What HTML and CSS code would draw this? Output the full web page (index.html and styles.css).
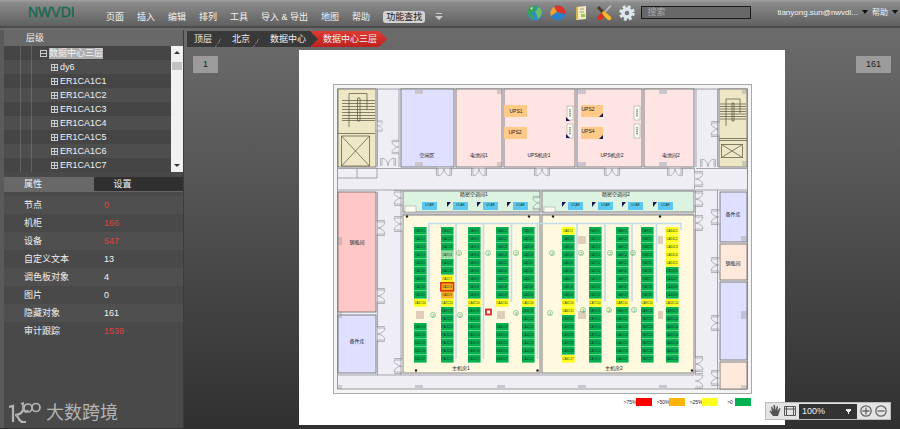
FILE: index.html
```html
<!DOCTYPE html>
<html lang="zh-CN">
<head>
<meta charset="utf-8">
<title>NWVDI</title>
<link rel="stylesheet" href="styles.css">
</head>
<body>
<header class="topbar">
  <a class="logo" href="#">NWVDI</a>
  <nav class="menu">
    <a href="#">页面</a><a href="#">插入</a><a href="#">编辑</a><a href="#">排列</a><a href="#">工具</a><a href="#">导入 &amp; 导出</a><a href="#">地图</a><a href="#">帮助</a>
    <button class="find" type="button">功能查找</button>
    <button class="icon more" type="button" aria-label="更多"><svg width="8" height="10" viewBox="0 0 8 10"><path d="M1 1.500h6" stroke="#ccc"/><path d="M0 4h8L4 8z" fill="#ccc"/></svg></button>
  </nav>
  <div class="tools">
    <button class="icon" type="button" aria-label="地球"><svg width="16" height="16" viewBox="0 0 16 16"><circle cx="8" cy="8" r="7.500" fill="#2f8fc4"/><path d="M1 5C3 1 7 0 9 1l1 2-2 1 0 2-3 1-1 2 3 2-1 3C3 13 0 9 1 5z" fill="#3ba253"/><path d="M11 2c3 1 4 4 4 6l-2 4-2 2-1-4-2-3 2-2z" fill="#6fbf62"/><path d="M3 3l3-1-1 3z" fill="#bfe5c4"/></svg></button>
    <button class="icon" type="button" aria-label="图表"><svg width="16" height="16" viewBox="0 0 16 16"><circle cx="8" cy="8" r="7.500" fill="#2d80c8"/><path d="M7 7L4 1.700A7.500 7.500 0 0 1 15.400 9z" fill="#dc3426"/><path d="M7 7L4 1.700A7.500 7.500 0 0 0 1 11z" fill="#f1a02d"/></svg></button>
    <button class="icon" type="button" aria-label="报表"><svg width="16" height="16" viewBox="0 0 16 16"><path d="M3 2l10-1v13l-10 1z" fill="#f1edc2"/><path d="M3 2v13l2-1V2z" fill="#d6b64b"/><path d="M7 4h4M7 7h4" stroke="#98a475"/><path d="M8 9h4v3H8z" fill="#a8c85c"/></svg></button>
    <button class="icon" type="button" aria-label="工具"><svg width="16" height="16" viewBox="0 0 16 16"><path d="M15 0.500L8 8" stroke="#b9c3c6" stroke-width="1.500"/><path d="M2 2l5 5" stroke="#4a3927" stroke-width="3"/><path d="M8 6l3 3-6 6c-2 1-4-1-4-3z" fill="#d9301e"/><path d="M6 7l2-1 7 6c1 2-1 4-3 3L7 10z" fill="#f6bb2c"/></svg></button>
    <button class="icon" type="button" aria-label="设置"><svg width="16" height="16" viewBox="0 0 16 16"><circle cx="8" cy="8" r="6.300" fill="none" stroke="#dce7ec" stroke-width="3" stroke-dasharray="2.800 2.150"/><circle cx="8" cy="8" r="4" fill="none" stroke="#dce7ec" stroke-width="3.500"/></svg></button>
  </div>
  <input class="search" type="search" placeholder="搜索" aria-label="搜索">
  <div class="account">
    <a href="#">tianyong.sun@nwvdi...<span class="caret"></span></a>
    <a href="#">帮助<span class="caret"></span></a>
  </div>
</header>

<div class="body">
  <aside class="sidebar">
    <h2 class="panel-title">层级</h2>
    <div class="tree-wrap">
      <ul class="tree">
        <li class="root"><span class="box minus"></span><span class="selected">数据中心三层</span></li>
        <li><span class="box"></span>dy6</li>
        <li><span class="box"></span>ER1CA1C1</li>
        <li><span class="box"></span>ER1CA1C2</li>
        <li><span class="box"></span>ER1CA1C3</li>
        <li><span class="box"></span>ER1CA1C4</li>
        <li><span class="box"></span>ER1CA1C5</li>
        <li><span class="box"></span>ER1CA1C6</li>
        <li><span class="box"></span>ER1CA1C7</li>
      </ul>
      <div class="scroll"><span class="up"></span><span class="thumb"></span><span class="down"></span></div>
    </div>
    <div class="tabs"><button class="active" type="button">属性</button><button type="button">设置</button></div>
    <table class="props">
      <tr><th scope="row">节点</th><td class="alert">0</td></tr>
      <tr><th scope="row">机柜</th><td class="alert">166</td></tr>
      <tr><th scope="row">设备</th><td class="alert">547</td></tr>
      <tr><th scope="row">自定义文本</th><td>13</td></tr>
      <tr><th scope="row">调色板对象</th><td>4</td></tr>
      <tr><th scope="row">图片</th><td>0</td></tr>
      <tr><th scope="row">隐藏对象</th><td>161</td></tr>
      <tr><th scope="row">审计跟踪</th><td class="alert">1538</td></tr>
    </table>
    <div class="brand">
      <svg width="32" height="22" viewBox="0 0 32 22" fill="none" stroke="#b4b4b4"><path d="M0 5l4-1v16M14 8Q12 13 6 13c4 0 3 7 8 7h3" stroke-width="2.200"/><path d="M12 2l2-1v6c0 3 3 4 5 1" stroke-width="1.700"/><circle cx="19" cy="6" r="4" stroke-width="1.700"/><circle cx="27" cy="5.500" r="4" stroke-width="1.700"/></svg>
      <span>大数跨境</span>
    </div>
  </aside>

  <main class="workspace">
    <nav class="crumbs" aria-label="位置"><a href="#">顶层</a><a href="#">北京</a><a href="#">数据中心</a><a class="current" href="#">数据中心三层</a></nav>
    <div class="stage">
      <button class="count" type="button">1</button>
      <svg class="plan" viewBox="299 50 486 375" role="img" aria-label="数据中心三层平面图">
        <defs>
          <g id="door" fill="none" stroke="#8b8b92" stroke-width=".6"><path d="M-7.500 0V8M-6 0V8Q-.5 7 0 0M7.500 0V8M6 0V8Q.5 7 0 0"/><path d="M-6 0H6" stroke="#f0eef5"/></g>
          <g id="ac"><rect width="15" height="8" fill="#5cc8f2"/><text class="tiny" x="7.500" y="4">UCAR</text></g>
          <path id="flag" d="M0 0h4l-4 5z" fill="#17174d"/>
          <path id="corner" d="M4 0v4h-4z" fill="#17174d"/>
          <g id="cab"><rect width="6" height="14" fill="#fafaf0" stroke="#999" stroke-width=".5"/><path d="M3 3v8" stroke="#65795a" stroke-width="1.200" stroke-dasharray="1.500 .5"/></g>
          <rect id="pillar" width="8" height="4" fill="#cbc5cf"/>
        </defs>
        <rect x="299" y="50" width="486" height="375" fill="#fff"/>
        <rect x="333.500" y="84.500" width="418" height="309" fill="#f4f4f4" stroke="#aaa"/>
        <rect x="337.500" y="89" width="410" height="300" fill="#f0eef5" stroke="#777" stroke-width=".7"/>
        <g class="rooms">
          <rect class="sand" x="338" y="89" width="38" height="78"/>
          <rect class="blue" x="401" y="89" width="53" height="78"/>
          <rect class="pink" x="456" y="89" width="46" height="78"/>
          <rect class="pink" x="504" y="89" width="71" height="78"/>
          <rect class="pink" x="577" y="89" width="65" height="78"/>
          <rect class="pink" x="644" y="89" width="50" height="78"/>
          <rect class="sand" x="719" y="89" width="28" height="78"/>
          <rect class="rose" x="338" y="192" width="38" height="120"/>
          <rect class="blue" x="338" y="315" width="38" height="58"/>
          <rect class="green" x="403" y="191" width="137" height="21"/>
          <rect class="green" x="542" y="191" width="152" height="21"/>
          <rect class="cream" x="403" y="215" width="137" height="158"/>
          <rect class="cream" x="542" y="215" width="152" height="158"/>
          <rect class="blue" x="720" y="192" width="27" height="50"/>
          <rect class="peach" x="720" y="244" width="27" height="36"/>
          <rect class="blue" x="720" y="282" width="27" height="78"/>
          <rect class="peach" x="720" y="362" width="27" height="27"/>
        </g>
        <path class="wall" d="M338 168.500H694.500V190H338M338 178h39V168M357 168v10M377.500 89v78M377.500 192v183M399 89v78M401 190v185M338 375H694.500M696 89v78M717.500 89v78M696 168.500h51.500V190H696M695.500 190v185M717.500 190v199M402 214H694"/>
        <path class="stairs" d="M342 100.500h33M342 103.500h33M342 106.500h33M342 109.500h33M342 112.500h33M342 115.500h33M342 118.500h33M342 120.500h33M349 127V93.500h18V110M357.500 98h2.500v23h-2.500zM338 133.500h37M341.500 136h28v30h-28zM341.500 136l28 30M369.500 136l-28 30M720 104h26M720 106.500h26M720 109h26M720 111.500h26M720 114h26M720 116.500h26M720 119h26M726 126V99h14v14M732 103h2v18h-2zM719 138.500h28M719 140.500h28M721.500 144.500h21v13h-21zM721.500 144.500l21 13M742.500 144.500l-21 13"/>
        <use href="#pillar" x="415" y="90"/><use href="#pillar" x="415" y="162"/><use href="#pillar" x="659" y="90"/><use href="#pillar" x="659" y="162"/><use href="#pillar" x="578" y="90"/><use href="#pillar" x="578" y="162"/><use href="#pillar" x="415" y="385"/><use href="#pillar" x="497" y="385"/><use href="#pillar" x="578" y="385"/><use href="#pillar" x="659" y="385"/>
        <path d="M338 237h4v8h-4zM338 312h4v6h-4zM338 385h4v4h-4zM497 90h5v4h-5zM497 162h5v5h-5zM742 90h5v4h-5zM742 161h5v5h-5zM741 236h6v6h-6zM741 311h6v8h-6zM741 385h6v4h-6z" fill="#999" fill-opacity=".4"/>
        <use href="#door" x="444" y="168"/><use href="#door" x="479" y="168"/><use href="#door" x="542" y="168"/><use href="#door" x="612" y="168"/><use href="#door" x="675" y="168"/>
        <use href="#door" transform="translate(388 166) rotate(180)"/><use href="#door" transform="translate(708 167) rotate(180)"/>
        <use href="#door" transform="translate(377 126) rotate(-90) scale(.7)"/><use href="#door" transform="translate(377 228) rotate(-90)"/><use href="#door" transform="translate(377 296) rotate(-90)"/><use href="#door" transform="translate(377 334) rotate(-90)"/>
        <use href="#door" transform="translate(399 147) rotate(90) scale(.9)"/><use href="#door" transform="translate(402 198) rotate(90)"/><use href="#door" transform="translate(402 224) rotate(90)"/><use href="#door" transform="translate(402 366) rotate(90)"/><use href="#door" transform="translate(540 203) rotate(90) scale(.9)"/>
        <use href="#door" transform="translate(719 129) rotate(90)"/><use href="#door" transform="translate(719 217) rotate(90)"/><use href="#door" transform="translate(719 265) rotate(90)"/><use href="#door" transform="translate(719 323) rotate(90)"/><use href="#door" transform="translate(719 378) rotate(90)"/>
        <use href="#door" transform="translate(695 179) rotate(-90)"/><use href="#door" transform="translate(695 199) rotate(-90)"/><use href="#door" transform="translate(695 223) rotate(-90)"/><use href="#door" transform="translate(695 364) rotate(-90)"/><use href="#door" transform="translate(695 381) rotate(-90)"/>
        <g fill="#ffc987"><rect x="504" y="105" width="23" height="12"/><rect x="504" y="127" width="23" height="12"/><rect x="581" y="105" width="22" height="12"/><rect x="581" y="127" width="22" height="12"/></g>
        <g class="label"><text x="516" y="113">UPS1</text><text x="515" y="134">UPS2</text><text x="588" y="111">UPS2</text><text x="588" y="133">UPS4</text></g>
        <use href="#cab" x="567" y="106"/><use href="#cab" x="567" y="124"/><use href="#cab" x="634" y="106"/><use href="#cab" x="634" y="124"/>
        <use href="#corner" x="599" y="113"/><use href="#corner" x="599" y="135"/>
        <path d="M566 117v4h4zM566 134v4h4z" fill="#17174d"/>
        <g fill="#fafaf0" stroke="#998" stroke-width=".5"><rect x="405" y="206" width="11" height="6"/><rect x="544" y="207" width="11" height="5"/></g>
        <use href="#ac" x="422" y="202"/><use href="#ac" x="453" y="202"/><use href="#ac" x="483" y="202"/><use href="#ac" x="513" y="202"/><use href="#ac" x="568" y="202"/><use href="#ac" x="598" y="202"/><use href="#ac" x="628" y="202"/><use href="#ac" x="658" y="202"/>
        <use href="#flag" x="447" y="202"/><use href="#flag" x="477" y="202"/><use href="#flag" x="507" y="202"/><use href="#flag" x="562" y="202"/><use href="#flag" x="592" y="202"/><use href="#flag" x="622" y="202"/><use href="#flag" x="653" y="202"/>
        <path d="M429 302V223.500H681V230M456 223.500V359M483.500 223.500V359M511.500 223.500V302M537.500 223.500V359M577 223.500V302M605 223.500V302M632 223.500V302M656.500 223.500V302" fill="none" stroke="#c0dcea" stroke-width="1.500"/>
        <g fill="#dfcfba"><rect x="416" y="311" width="8" height="8"/><rect x="497" y="311" width="8" height="8"/><rect x="578" y="236" width="8" height="8"/><rect x="578" y="311" width="8" height="8"/><rect x="658" y="236" width="5" height="8"/><rect x="658" y="311" width="5" height="8"/></g>
        <g fill="#222"><circle cx="407" cy="216.500" r="1.200"/><circle cx="529" cy="216.500" r="1.200"/><circle cx="553" cy="216.500" r="1.200"/><circle cx="660" cy="216.500" r="1.200"/><circle cx="416" cy="370.500" r="1.200"/><circle cx="537.500" cy="370.500" r="1.200"/><circle cx="692" cy="370.500" r="1.200"/></g>
        <g id="racks"></g>
        <g id="marks"></g>
        <rect x="440.800" y="282.800" width="12.800" height="8" fill="none" stroke="#dc2a12" stroke-width="1.500"/>
        <rect x="486" y="309.500" width="5" height="5" fill="#fff" stroke="#dc2a2a" stroke-width="1.800"/>
        <g class="label"><text x="427" y="157">空闲区</text><text x="479" y="157">电池间1</text><text x="539" y="157">UPS机房1</text><text x="612" y="157">UPS机房2</text><text x="671" y="157">电池间2</text><text x="474" y="196">精密空调间1</text><text x="616" y="196">精密空调间2</text><text x="357" y="244">钢瓶间</text><text x="357" y="343">备件库</text><text x="733" y="216">备件库</text><text x="733" y="265">钢瓶间</text><text x="461" y="370">主机房1</text><text x="614" y="370">主机房2</text></g>
        <g class="label"><text x="630" y="404">&gt;75%</text><text x="663" y="404">&gt;50%</text><text x="696" y="404">&gt;25%</text><text x="730" y="404">&gt;0</text></g>
        <rect x="636" y="398" width="16" height="8" fill="#fe0000"/><rect x="669" y="398" width="16" height="8" fill="#fdb40b"/><rect x="702" y="398" width="16" height="8" fill="#ffff1f"/><rect x="735" y="398" width="16" height="8" fill="#05b050"/>
      </svg>
      <button class="count right" type="button">161</button>
    </div>
    <div class="zoombar">
      <button class="icon" type="button" aria-label="平移"><svg width="12" height="14" viewBox="0 0 12 14"><path d="M4 12L0.500 7.500 1.500 6.500 3 8 2 3 3 2.500 4.500 6 4.500 1H6L6.500 6 8 2 9 2.500 8.500 7 10.500 4 11.500 4.500 9 12z" fill="#555"/></svg></button>
      <button class="icon" type="button" aria-label="适合窗口"><svg width="12" height="12" viewBox="0 0 12 12" fill="none" stroke="#555"><path d="M.5 1.500h11v9H.5zM0 4h12M2.500 1v9M9.500 1v9"/></svg></button>
      <select aria-label="缩放"><option>100%</option></select>
      <button class="icon" type="button" aria-label="放大"><svg width="12" height="12" viewBox="0 0 12 12" fill="none" stroke="#666" stroke-width="1.300"><circle cx="6" cy="6" r="5.200"/><path d="M2.500 6h7M6 2.500v7"/></svg></button>
      <button class="icon" type="button" aria-label="缩小"><svg width="12" height="12" viewBox="0 0 12 12" fill="none" stroke="#666" stroke-width="1.300"><circle cx="6" cy="6" r="5.200"/><path d="M2.500 6h7"/></svg></button>
    </div>
  </main>
</div>
<script src="plan.js"></script>
</body>
</html>
```
FILE: styles.css
```css
* { box-sizing: border-box; }
body {
  margin: 0;
  min-height: 100vh;
  display: flex;
  flex-direction: column;
  font: 9px/14px "Liberation Sans", "Noto Sans CJK SC", sans-serif;
  color: #f2f2f2;
  background: linear-gradient(#707070, #303030);
}
a { color: inherit; text-decoration: none; }
button { font: inherit; color: inherit; border: 0; padding: 0; background: none; }
svg { display: block; }

.topbar {
  display: flex;
  align-items: center;
  height: 28px;
  padding: 0 2px 0 28px;
  background: linear-gradient(#a0a0a0, #8a8a8a 3px, #606060);
  border-bottom: 2px solid #4c4c4c;
}
.logo {
  width: 78px;
  padding-bottom: 2px;
  font-size: 14px;
  color: #146850;
  -webkit-text-stroke: 0.3px #146850;
  background: linear-gradient(#4d7568, #4d7568) left bottom / 44px 1px no-repeat;
}
.menu { display: flex; align-items: center; gap: 13px; padding-top: 8px; white-space: nowrap; }
.find { padding: 0 3px; border-radius: 3px; line-height: 12px; color: #151515; background: #d2d2d2; }
.more { margin-left: -3px; }
.tools { display: flex; gap: 7px; margin-left: auto; }
.search {
  width: 110px;
  height: 13px;
  margin: 0 26px 2px 6px;
  padding: 0 5px;
  font: inherit;
  color: #eee;
  background: #686868;
  border: 1px solid #1b1b1b;
  outline: 0;
}
.search::placeholder { color: #aaa; opacity: 1; }
.account { display: flex; gap: 4px; font-size: 8px; white-space: nowrap; }
.caret {
  display: inline-block;
  margin-left: 4px;
  border: 3px solid transparent;
  border-top: 4px solid #111;
  border-bottom: 0;
  vertical-align: 1px;
}

.body { flex: 1; display: flex; }
.sidebar {
  width: 184px;
  margin: 2px 3px 1px 0;
  border-left: 4px solid #5a5a5a;
  border-right: 1px solid #3c3c3c;
  background: #494949;
  display: flex;
  flex-direction: column;
}
.panel-title { margin: 0; padding: 0 22px; font-size: 9px; font-weight: 400; line-height: 16px; background: #686868; }
.tree-wrap { display: flex; }
.tree {
  flex: 1;
  margin: 0;
  padding: 0;
  list-style: none;
  background: linear-gradient(90deg, transparent 16px, #666 16px, #666 17px, transparent 17px, transparent 27px, #666 27px, #666 28px, transparent 28px);
}
.tree li { display: flex; align-items: center; height: 14px; padding-left: 47px; background: #ffffff08; }
.tree li:nth-child(odd) { background: #0000000c; }
.tree .root { padding-left: 36px; }
.selected { background: #aeaeae; line-height: 11px; }
.box {
  width: 7px;
  height: 7px;
  margin-right: 2px;
  border: 1px solid #ccc;
  background: linear-gradient(#ccc, #ccc) center / 5px 1px no-repeat, linear-gradient(#ccc, #ccc) center / 1px 5px no-repeat;
}
.minus { background: linear-gradient(#ccc, #ccc) center / 5px 1px no-repeat; }
.scroll { width: 12px; display: flex; flex-direction: column; align-items: center; padding: 5px 0; background: #f1f1f1; }
.scroll .up { border: 3px solid transparent; border-top: 0; border-bottom: 3px solid #333; }
.scroll .thumb { width: 10px; height: 8px; margin-top: 8px; background: #c2c2c2; }
.scroll .down { margin-top: auto; border: 3px solid transparent; border-bottom: 0; border-top: 3px solid #333; }

.tabs { display: flex; margin-top: 5px; border-bottom: 1px solid #666; }
.tabs button { flex: 1; height: 14px; padding-left: 20px; text-align: left; background: #303030; }
.tabs .active { background: #686868; }

.props { width: 100%; margin-top: 4px; border-spacing: 0; }
.props tr:nth-child(odd) { background: #4f4f4f; }
.props th, .props td { height: 18px; padding: 0; text-align: left; font-weight: 400; }
.props th { width: 100px; padding-left: 20px; }
.props .alert { color: #df4242; }

.brand { display: flex; align-items: center; gap: 5px; margin-top: auto; padding: 0 5px 4px; font-size: 18px; line-height: 22px; color: #b4b4b4; }

.workspace { flex: 1; min-width: 0; position: relative; padding-top: 3px; }
.crumbs { display: flex; }
.crumbs a {
  padding: 0 13px 0 7px;
  line-height: 16px;
  background: linear-gradient(125deg, transparent 48%, #777 48%, #777 54%, transparent 54%) right 3px bottom / 8px 8px no-repeat, #393939;
}
.crumbs a + a { padding-left: 7px; }
.crumbs a:nth-child(3) { background: #393939; }
.crumbs a.current {
  margin-left: -9px;
  padding: 0 10px 0 13px;
  background: linear-gradient(#df3a33, #bd211f);
  clip-path: polygon(0 0, calc(100% - 8px) 0, 100% 50%, calc(100% - 8px) 100%, 0 100%, 8px 50%);
}
.stage {
  display: grid;
  grid-template-columns: 106fr 486fr 106fr;
  align-items: start;
  padding: 3px 9px 0 6px;
}
.plan { width: 100%; }
.count { justify-self: start; margin-top: 6px; padding: 0 10px; line-height: 17px; color: #222; background: #9b9b9b; }
.right { justify-self: end; }
.rooms rect { stroke: #666; stroke-width: 0.8; }
.sand { fill: #eee7c6; }
.blue { fill: #dfdfff; }
.pink { fill: #ffe4e4; }
.rose { fill: #ffc8c8; }
.green { fill: #dcf3e2; }
.cream { fill: #fff9df; }
.peach { fill: #ffe9dc; }
.wall { fill: none; stroke: #85858b; stroke-width: 0.7; }
.stairs { fill: none; stroke: #55503c; stroke-width: 0.7; }
.label { font-size: 5px; fill: #222; text-anchor: middle; }
.tiny { font-size: 3px; fill: #093a22; text-anchor: middle; }
.mark { font-size: 4px; fill: #1f8f42; text-anchor: middle; }
.ring { fill: none; stroke: #4fb56d; stroke-width: 0.6; }

.zoombar {
  position: absolute;
  right: 9px;
  bottom: 9px;
  display: flex;
  align-items: center;
  gap: 3px;
  height: 18px;
  padding: 1px 3px;
  background: #e4e4e4;
  border: 1px solid #bbb;
}
.zoombar select {
  width: 58px;
  height: 15px;
  padding: 0 3px;
  border: 0;
  appearance: none;
  font: inherit;
  color: #eee;
  background: conic-gradient(from -30deg at 50% 100%, #eee 60deg, transparent 0) right 6px center / 5px 5px no-repeat, #333;
}
```
FILE: plan.js
```js
const FILL = { g: '#06b152', y: '#ffff1a', o: '#f9b31c', p: '#8fd9a0' };
const FULL = 'ggggggggg' + 'y' + 'ggggggg';
const COLUMNS = [
  [414, 'gggggggggy..ggggg'],
  [441, 'gggpggyooyggggggg'],
  [468, FULL],
  [496, 'gggggggggy..ggggg'],
  [522, FULL],
  [562, 'yggggggggyygggggy'],
  [589, FULL],
  [616, FULL],
  [641, FULL],
  [666, 'yyyyyggggyggggggg']
];
const MARKS = [
  [459, 253, 1], [488, 253, 1], [516, 253, 2],
  [433, 315, 2], [460, 315, 2], [516, 313, 3],
  [552, 253, 2], [581, 253, 2], [610, 253, 2], [633, 253, 2],
  [550, 313, 1], [583, 310, 3], [609, 310, 4], [634, 310, 1]
];

let racks = '';
COLUMNS.forEach(([x, cells], c) => {
  [...cells].forEach((cell, r) => {
    if (cell === '.') return;
    const y = 227 + r * 8;
    racks += `<rect x="${x}" y="${y}" width="12.600" height="7.600" fill="${FILL[cell]}"/>` +
      `<text class="tiny" x="${x + 6}" y="${y + 5}">CA${c + 1}C${r + 1}</text>`;
  });
});
document.getElementById('racks').innerHTML = racks;
document.getElementById('marks').innerHTML = MARKS.map(([x, y, n]) =>
  `<circle class="ring" cx="${x}" cy="${y}" r="2.500"/><text class="mark" x="${x}" y="${y + 1.5}">${n}</text>`
).join('');
```
